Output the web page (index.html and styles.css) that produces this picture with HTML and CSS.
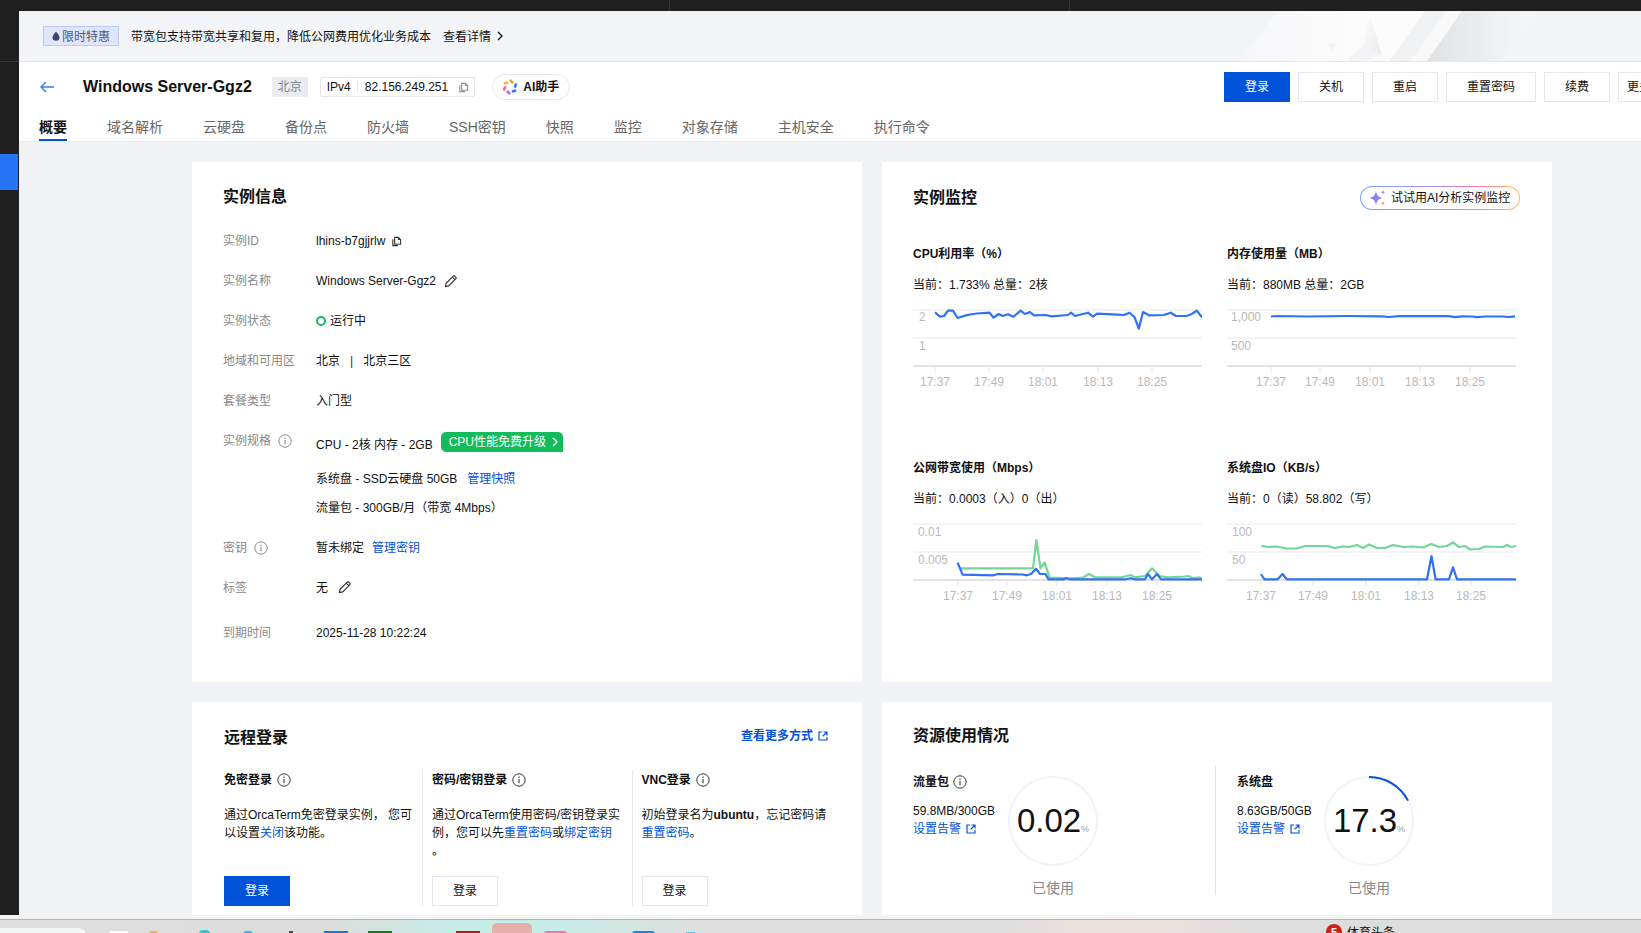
FILE: index.html
```html
<!DOCTYPE html>
<html lang="zh-CN">
<head>
<meta charset="utf-8">
<title>Windows Server-Ggz2</title>
<link rel="stylesheet" href="styles.css">
</head>
<body>
<svg class="defs" width="0" height="0" aria-hidden="true">
  <defs>
    <symbol id="i-info" viewBox="0 0 14 14"><circle cx="7" cy="7" r="6.2" fill="none" stroke="currentColor" stroke-width="1"/><path d="M7 6v4.2M7 3.600v1.300" fill="none" stroke="currentColor" stroke-width="1.100"/></symbol>
    <symbol id="i-copy" viewBox="0 0 12 12"><path d="M4 1.500h4l2.500 2.500v5H4z" fill="none" stroke="currentColor" stroke-width="1.200"/><path d="M2 3.500v7h5.500" fill="none" stroke="currentColor" stroke-width="1.200"/><path d="M7.600 1.500v2.800h2.800" fill="currentColor"/></symbol>
    <symbol id="i-edit" viewBox="0 0 14 14"><path d="M1.500 12.500l.6-3.200 7.200-7.200a1 1 0 0 1 1.400 0l1.200 1.200a1 1 0 0 1 0 1.400l-7.200 7.200zM8.300 3.200l2.500 2.500" fill="none" stroke="currentColor" stroke-width="1.200"/></symbol>
    <symbol id="i-ext" viewBox="0 0 10 10"><path d="M4 1H1v8h8V6" fill="none" stroke="currentColor" stroke-width="1.200"/><path d="M5.500 1H9v3.500M9 1L4.600 5.400" fill="none" stroke="currentColor" stroke-width="1.200"/></symbol>
    <symbol id="i-chev" viewBox="0 0 6 10"><path d="M1 1l4 4-4 4" fill="none" stroke="currentColor" stroke-width="1.300"/></symbol>
  </defs>
</svg>

<div class="screen">
  <div class="topbar"></div>
  <div class="shell">
    <aside class="rail"><div class="rail-line"></div><div class="rail-mark"></div></aside>
    <main class="main">
      <section class="banner">
        <svg class="banner-art" width="421" height="50" viewBox="0 0 421 50" aria-hidden="true">
          <defs>
            <linearGradient id="bandGrad" gradientUnits="userSpaceOnUse" x1="215" x2="300" y1="25" y2="25"><stop offset="0" stop-color="#e2e3e5"/><stop offset="1" stop-color="#f4f5f7"/></linearGradient>
            <linearGradient id="whiteGrad" gradientUnits="userSpaceOnUse" x1="20" x2="200" y1="25" y2="25"><stop offset="0" stop-color="#f5f6f8"/><stop offset=".5" stop-color="#fbfbfc"/><stop offset="1" stop-color="#fcfcfd"/></linearGradient>
            <linearGradient id="arrowGrad" x1="0" x2="1" y1="0" y2="1"><stop offset="0" stop-color="#fbfbfc"/><stop offset="1" stop-color="#ebecee"/></linearGradient>
          </defs>
          <polygon points="57,0 205,0 170,50 20,50" fill="url(#whiteGrad)"/>
          <polygon points="205,0 226,0 191,50 170,50" fill="#f1f2f3"/>
          <polygon points="226,0 242,0 207,50 191,50" fill="#f9f9fa"/>
          <polygon points="242,0 320,0 280,50 207,50" fill="url(#bandGrad)"/>
          <polygon points="150,5 162,44 143,35" fill="url(#arrowGrad)"/>
          <polygon points="143,35 162,44 145,50 127,50" fill="#f2f3f4"/>
          <polygon points="107,32 118,32 112,40" fill="#f3f4f5"/>
        </svg>
        <span class="promo-tag"><svg class="drop" width="8" height="10" viewBox="0 0 8 10"><path d="M4 .5C5.500 2.600 7.500 4.500 7.500 6.300a3.500 3.500 0 0 1-7 0C.5 4.500 2.500 2.600 4 .5z" fill="currentColor"/></svg>限时特惠</span>
        <span class="banner-text">带宽包支持带宽共享和复用，降低公网费用优化业务成本</span>
        <a class="banner-link">查看详情<svg class="chev" width="6" height="10"><use href="#i-chev"/></svg></a>
      </section>

      <header class="head">
        <div class="head-row">
          <div class="head-left">
            <svg class="back" width="14" height="12" viewBox="0 0 14 12"><path d="M6 1L1 6l5 5M1 6h13" fill="none" stroke="#3a7bea" stroke-width="1.400"/></svg>
            <h1 class="inst-title">Windows Server-Ggz2</h1>
            <span class="region-tag">北京</span>
            <span class="ip-box"><span class="ip-kind">IPv4</span><span class="ip-value">82.156.249.251</span><svg class="ip-copy" width="11" height="11"><use href="#i-copy"/></svg></span>
            <span class="ai-btn">
              <svg width="16" height="16" viewBox="0 0 16 16"><g fill="none" stroke-width="2.600"><path d="M8 .8L11 4.200" stroke="#f39a38"/><path d="M8 .8L11 4.200" stroke="#2f7df0" transform="rotate(60 8 8)"/><path d="M8 .8L11 4.200" stroke="#3f6ff0" transform="rotate(120 8 8)"/><path d="M8 .8L11 4.200" stroke="#a86cf0" transform="rotate(180 8 8)"/><path d="M8 .8L11 4.200" stroke="#f2609c" transform="rotate(240 8 8)"/><path d="M8 .8L11 4.200" stroke="#f4b93c" transform="rotate(300 8 8)"/></g></svg>
              AI助手
            </span>
          </div>
          <div class="actions">
            <button class="btn btn-primary">登录</button>
            <button class="btn">关机</button>
            <button class="btn">重启</button>
            <button class="btn btn-wide">重置密码</button>
            <button class="btn">续费</button>
            <button class="btn">更多操作</button>
          </div>
        </div>
        <nav class="tabs">
          <a class="tab tab-active">概要</a>
          <a class="tab">域名解析</a>
          <a class="tab">云硬盘</a>
          <a class="tab">备份点</a>
          <a class="tab">防火墙</a>
          <a class="tab">SSH密钥</a>
          <a class="tab">快照</a>
          <a class="tab">监控</a>
          <a class="tab">对象存储</a>
          <a class="tab">主机安全</a>
          <a class="tab">执行命令</a>
        </nav>
      </header>

      <div class="content">
        <section class="card card-info">
          <h2 class="card-title info-title">实例信息</h2>
          <div class="row"><span class="lbl">实例ID</span><span class="val">lhins-b7gjjrlw<svg class="ico-copy" width="11" height="11"><use href="#i-copy"/></svg></span></div>
          <div class="row"><span class="lbl">实例名称</span><span class="val">Windows Server-Ggz2<svg class="ico-edit" width="14" height="14"><use href="#i-edit"/></svg></span></div>
          <div class="row"><span class="lbl">实例状态</span><span class="val"><i class="status-dot"></i>运行中</span></div>
          <div class="row"><span class="lbl">地域和可用区</span><span class="val">北京<i class="pipe">|</i>北京三区</span></div>
          <div class="row"><span class="lbl">套餐类型</span><span class="val">入门型</span></div>
          <div class="spec">
            <span class="lbl">实例规格<svg class="ico-info-gray" width="14" height="14"><use href="#i-info"/></svg></span>
            <div class="spec-lines">
              <div class="spec-line">CPU - 2核 内存 - 2GB<span class="up-tag">CPU性能免费升级<svg class="chev-up" width="6" height="10"><use href="#i-chev"/></svg></span></div>
              <div class="spec-line spec-second">系统盘 - SSD云硬盘 50GB<a class="link link-gap">管理快照</a></div>
              <div class="spec-line spec-third">流量包 - 300GB/月（带宽 4Mbps）</div>
            </div>
          </div>
          <div class="row"><span class="lbl">密钥<svg class="ico-info-gray" width="14" height="14"><use href="#i-info"/></svg></span><span class="val">暂未绑定<a class="link link-gap-s">管理密钥</a></span></div>
          <div class="row"><span class="lbl">标签</span><span class="val">无<svg class="ico-edit ico-edit-tag" width="14" height="14"><use href="#i-edit"/></svg></span></div>
          <div class="row row-last"><span class="lbl">到期时间</span><span class="val">2025-11-28 10:22:24</span></div>
        </section>

        <section class="card card-monitor">
          <div class="mon-head">
            <h2 class="card-title">实例监控</h2>
            <span class="ai-pill">
              <svg width="18" height="18" viewBox="0 0 18 18"><defs><linearGradient id="spark" x1="0" x2="1" y1="0" y2="1"><stop offset="0" stop-color="#6f8cff"/><stop offset="1" stop-color="#b06cf0"/></linearGradient></defs><path d="M7 2c.8 4.300 2.200 6 6.500 7C9.200 10 7.800 11.700 7 16 6.200 11.700 4.800 10 .5 9 4.800 8 6.200 6.300 7 2z" fill="url(#spark)"/><path d="M14 .8c.3 1.500.9 2.100 2.400 2.500-1.500.4-2.100 1-2.400 2.500-.3-1.500-.9-2.100-2.400-2.500 1.500-.4 2.100-1 2.400-2.500z" fill="#a98cf5"/><path d="M14 11.800c.3 1.500.9 2.100 2.400 2.500-1.500.4-2.100 1-2.400 2.500-.3-1.500-.9-2.100-2.400-2.500 1.500-.4 2.100-1 2.400-2.500z" fill="#f59a7c"/></svg>
              试试用AI分析实例监控
            </span>
          </div>
          <div class="charts">
            <div class="chart">
              <div class="chart-title">CPU利用率（%）</div>
              <div class="chart-sub">当前：1.733% 总量：2核</div>
              <svg class="plot" width="289" height="95" viewBox="0 0 289 95">
                <path class="grid" d="M0 10H289M0 38H289"/><path class="axis" d="M0 66H289"/>
                <path class="tick" d="M22 67v5M76 67v5M130 67v5M185 67v5M239 67v5"/>
                <text class="ylab" x="6" y="21">2</text><text class="ylab" x="6" y="50">1</text>
                <text class="xlab" x="22" y="86">17:37</text><text class="xlab" x="76" y="86">17:49</text><text class="xlab" x="130" y="86">18:01</text><text class="xlab" x="185" y="86">18:13</text><text class="xlab" x="239" y="86">18:25</text>
                <polyline class="l-blue" points="22,12.300 27,16.700 31,16 35,10.700 40,10.700 44.600,18 51.600,15.700 60,14 64,13.500 76.500,12.700 80.600,17.700 85.600,14 89.800,16 95,14.300 100.500,16.700 107.600,10.700 111.700,14 117,12 121,15.300 132.500,15 138.700,16.300 155,15 158,12.700 162,16 175,12.700 180,16.700 184,13.700 205,14.700 211,15 216.600,12.700 221.600,17.300 225.800,28.700 230,12 236,15.300 250.600,15 257.700,12.700 263,16 273.400,16 278.800,14 283.800,10.700 289,17.300"/>
              </svg>
            </div>
            <div class="chart">
              <div class="chart-title">内存使用量（MB）</div>
              <div class="chart-sub">当前：880MB 总量：2GB</div>
              <svg class="plot" width="289" height="95" viewBox="0 0 289 95">
                <path class="grid" d="M0 10H289M0 38H289"/><path class="axis" d="M0 66H289"/>
                <path class="tick" d="M44 67v5M93 67v5M143 67v5M193 67v5M243 67v5"/>
                <text class="ylab" x="4" y="21">1,000</text><text class="ylab" x="4" y="50">500</text>
                <text class="xlab" x="44" y="86">17:37</text><text class="xlab" x="93" y="86">17:49</text><text class="xlab" x="143" y="86">18:01</text><text class="xlab" x="193" y="86">18:13</text><text class="xlab" x="243" y="86">18:25</text>
                <polyline class="l-blue" points="44,16.500 50,16 80,16.500 120,16 155,16.300 162,17 172,16.200 222,16.200 228,17.200 235,16.400 245,16.500 250,17.100 258,16.500 275,16.500 282,17 288,16.300"/>
              </svg>
            </div>
            <div class="chart">
              <div class="chart-title">公网带宽使用（Mbps）</div>
              <div class="chart-sub">当前：0.0003（入）0（出）</div>
              <svg class="plot" width="289" height="95" viewBox="0 0 289 95">
                <path class="grid" d="M0 10H289M0 38H289"/><path class="axis" d="M0 66H289"/>
                <path class="tick" d="M45 67v5M94 67v5M144 67v5M194 67v5M244 67v5"/>
                <text class="ylab" x="5" y="22">0.01</text><text class="ylab" x="5" y="50">0.005</text>
                <text class="xlab" x="45" y="86">17:37</text><text class="xlab" x="94" y="86">17:49</text><text class="xlab" x="144" y="86">18:01</text><text class="xlab" x="194" y="86">18:13</text><text class="xlab" x="244" y="86">18:25</text>
                <polyline class="l-green" points="47.500,54.300 120,54.300 123.400,26 127.500,54.300 131.600,48.700 136.600,63.700 151,64 155,64.700 170,63.500 176,60 182,63.300 209,63.300 217.500,61 221.600,63.300 232,62 239,54.300 246.500,62 254.800,63.300 271,62.500 275.500,62 279.700,64.300 286,63.300 289,64.300"/>
                <polyline class="l-blue" points="44.600,48.700 49.600,60.700 80.600,61.300 84.800,60 109.700,60.500 113.800,61.300 118,60 123,54.700 127,60 132.500,60 135.400,65.300 151,65.300 153,64 156,65.300 213,65.300 217.500,64.300 221.600,65.300 232,65.300 235,60 239,65.300 244,60 248,65.300 289,65.300"/>
              </svg>
            </div>
            <div class="chart">
              <div class="chart-title">系统盘IO（KB/s）</div>
              <div class="chart-sub">当前：0（读）58.802（写）</div>
              <svg class="plot" width="289" height="95" viewBox="0 0 289 95">
                <path class="grid" d="M0 10H289M0 38H289"/><path class="axis" d="M0 66H289"/>
                <path class="tick" d="M34 67v5M86 67v5M139 67v5M192 67v5M244 67v5"/>
                <text class="ylab" x="5" y="22">100</text><text class="ylab" x="5" y="50">50</text>
                <text class="xlab" x="34" y="86">17:37</text><text class="xlab" x="86" y="86">17:49</text><text class="xlab" x="139" y="86">18:01</text><text class="xlab" x="192" y="86">18:13</text><text class="xlab" x="244" y="86">18:25</text>
                <polyline class="l-green" points="34,32 42,33 50,32.500 60,34.500 70,34.500 78,32 92,32 100,32 108,34 116,32.500 122,33 130,31 136,34 142,30.500 150,34 158,34 166,31 176,33 186,32.500 196,33.500 204.500,30 212,33 220,32 226,28.500 232,33 238,32 243,35.500 252,35 258,32.500 276,33 280,31 284,33 289,32"/>
                <polyline class="l-blue" points="34,60 37.400,65.300 50.600,65.300 55.600,60 59.800,65.300 200,65.300 204.500,42 208.600,65.300 221.900,65.300 226,53.300 230,65.300 289,65.300"/>
              </svg>
            </div>
          </div>
        </section>

        <section class="card card-login">
          <div class="login-head">
            <h2 class="card-title">远程登录</h2>
            <a class="link link-more">查看更多方式<svg class="ico-ext" width="10" height="10"><use href="#i-ext"/></svg></a>
          </div>
          <div class="login-cols">
            <div class="login-col">
              <div class="col-title">免密登录<svg class="ico-info-dark" width="14" height="14"><use href="#i-info"/></svg></div>
              <p class="col-text">通过OrcaTerm免密登录实例， 您可<br>以设置<a class="link">关闭</a>该功能。</p>
              <button class="btn btn-primary">登录</button>
            </div>
            <div class="login-col login-col-b">
              <div class="col-title">密码/密钥登录<svg class="ico-info-dark" width="14" height="14"><use href="#i-info"/></svg></div>
              <p class="col-text">通过OrcaTerm使用密码/密钥登录实<br>例，您可以先<a class="link">重置密码</a>或<a class="link">绑定密钥</a><br>。</p>
              <button class="btn">登录</button>
            </div>
            <div class="login-col login-col-b">
              <div class="col-title">VNC登录<svg class="ico-info-dark" width="14" height="14"><use href="#i-info"/></svg></div>
              <p class="col-text">初始登录名为<b class="name">ubuntu</b>，忘记密码请<br><a class="link">重置密码</a>。</p>
              <button class="btn">登录</button>
            </div>
          </div>
        </section>

        <section class="card card-res">
          <h2 class="card-title res-title">资源使用情况</h2>
          <div class="res-row">
            <div class="res-part res-part-a">
              <div class="res-info res-info-a">
                <div class="res-name">流量包<svg class="ico-info-dark" width="14" height="14"><use href="#i-info"/></svg></div>
                <div class="res-used">59.8MB/300GB</div>
                <a class="link res-link">设置告警<svg class="ico-ext" width="10" height="10"><use href="#i-ext"/></svg></a>
              </div>
              <div class="gauge-col">
                <div class="gauge">
                  <svg class="gauge-ring" width="90" height="90" viewBox="0 0 90 90"><circle cx="45" cy="45" r="44" fill="none" stroke="#f1f3f8" stroke-width="2"/></svg>
                  <span class="gauge-num">0.02</span><span class="gauge-pct">%</span>
                </div>
                <div class="gauge-cap">已使用</div>
              </div>
            </div>
            <div class="res-part">
              <div class="res-info res-info-b">
                <div class="res-name">系统盘</div>
                <div class="res-used">8.63GB/50GB</div>
                <a class="link res-link">设置告警<svg class="ico-ext" width="10" height="10"><use href="#i-ext"/></svg></a>
              </div>
              <div class="gauge-col">
                <div class="gauge">
                  <svg class="gauge-ring" width="90" height="90" viewBox="0 0 90 90"><circle cx="45" cy="45" r="44" fill="none" stroke="#f1f3f8" stroke-width="2"/><path d="M45 1A44 44 0 0 1 84 24.600" fill="none" stroke="#0052d9" stroke-width="2"/></svg>
                  <span class="gauge-num">17.3</span><span class="gauge-pct">%</span>
                </div>
                <div class="gauge-cap">已使用</div>
              </div>
            </div>
          </div>
        </section>
      </div>
    </main>
  </div>
  <div class="strip"></div>
  <div class="taskbar">
    <i class="tb tb-chip"></i><i class="tb tb-white"></i><i class="tb tb-orange"></i><i class="tb tb-teal"></i><i class="tb tb-cyan"></i><i class="tb tb-dark"></i><i class="tb tb-blue"></i><i class="tb tb-green"></i><i class="tb tb-red"></i><i class="tb tb-active"></i><i class="tb tb-pink"></i><i class="tb tb-blue2"></i><i class="tb tb-cyan2"></i>
    <span class="tb-badge">5</span><span class="tb-news">体育头条</span>
  </div>
</div>
</body>
</html>
```

FILE: styles.css
```css
* { box-sizing: border-box; }
html, body { margin: 0; padding: 0; }
body {
  width: 1641px;
  height: 933px;
  overflow: hidden;
  font-family: "Liberation Sans", "Noto Sans CJK SC", sans-serif;
  font-size: 12px;
  color: #111;
  background: #f1f2f6;
}
a { color: inherit; text-decoration: none; }
h1, h2, p { margin: 0; }
.defs { position: absolute; }

.screen { display: flex; flex-direction: column; width: 1641px; height: 933px; overflow: hidden; }
.topbar {
  height: 11px;
  flex: none;
  background: linear-gradient(90deg, #1f1f1f 669px, #333 669px, #333 670px, #1f1f1f 670px, #1f1f1f 1069px, #333 1069px, #333 1070px, #1f1f1f 1070px);
}
.shell { display: flex; height: 904px; flex: none; overflow: hidden; }
.rail { width: 19px; flex: none; background: #1f1f1f; padding-top: 50px; }
.rail-line { height: 1px; background: #383838; }
.rail-mark { width: 18px; height: 36px; margin-top: 92px; background: #2673f6; }
.main { width: 1622px; flex: none; display: flex; flex-direction: column; overflow: hidden; }

/* banner */
.banner {
  position: relative;
  display: flex;
  align-items: center;
  height: 51px;
  flex: none;
  padding: 0 0 1px 24px;
  background: #f3f4f7;
  border-bottom: 1px solid #e6e8ee;
}
.banner-art { position: absolute; right: 0; top: 0; }
.promo-tag {
  display: flex;
  align-items: center;
  justify-content: center;
  gap: 2px;
  width: 76px;
  height: 20px;
  background: #dfe5fb;
  border: 1px solid #bccafa;
  color: #4d5a74;
}
.drop { color: #3c4a68; }
.banner-text { margin-left: 12px; position: relative; }
.banner-link { display: flex; align-items: center; margin-left: 12px; position: relative; }
.chev { margin-left: 6px; }

/* header */
.head { flex: none; height: 80px; background: #fff; border-bottom: 1px solid #e6e8ee; display: flex; flex-direction: column; }
.head-row { display: flex; height: 50px; padding-top: 10px; }
.head-left { display: flex; align-items: center; width: 1205px; height: 30px; padding-left: 21px; flex: none; }
.inst-title { margin-left: 29px; font-size: 16px; line-height: 22px; font-weight: 700; white-space: nowrap; color: #111; }
.region-tag { margin-left: 20px; width: 36px; height: 20px; line-height: 20px; text-align: center; background: #e9edf2; color: #80868f; }
.ip-box { display: flex; align-items: center; width: 155px; height: 20px; margin-left: 12px; padding-left: 6px; border: 1px solid #e3e6eb; border-radius: 2px; }
.ip-kind { padding-right: 6px; border-right: 1px solid #e3e6eb; line-height: 11px; }
.ip-value { margin-left: 7px; }
.ip-copy { margin-left: 10px; color: #8a8f99; }
.ai-btn { display: flex; align-items: center; justify-content: center; gap: 5px; width: 78px; height: 26px; margin-left: 17px; border: 1px solid #e6e8ee; border-radius: 13px; font-weight: 700; line-height: 20px; }
.actions { display: flex; gap: 8px; flex: none; }
.btn {
  flex: none;
  width: 66px;
  height: 30px;
  padding: 0;
  background: #fff;
  border: 1px solid #e3e6ee;
  font: inherit;
  line-height: 20px;
  color: #111;
}
.btn-wide { width: 90px; }
.btn-primary { background: #0052d9; border-color: #0052d9; color: #fff; }

.tabs { display: flex; gap: 40px; padding-left: 20px; height: 30px; }
.tab { height: 30px; line-height: 32px; font-size: 14px; color: #666; white-space: nowrap; }
.tab-active { color: #111; font-weight: 700; border-bottom: 2px solid #0052d9; }

/* content */
.content {
  display: grid;
  grid-template-columns: 670px 670px;
  grid-template-rows: 520px 240px;
  gap: 20px;
  padding: 20px 0 0 173px;
  flex: 1;
  min-height: 0;
  background: #f1f2f6;
}
.card { background: #fff; }
.card-title { height: 24px; font-size: 16px; font-weight: 700; line-height: 24px; color: #111; }

/* info */
.card-info { padding: 23px 0 0 31px; }
.info-title { margin-bottom: 12px; }
.row { display: flex; align-items: center; height: 40px; }
.row-last { margin-top: 5px; }
.lbl { display: flex; align-items: center; width: 93px; flex: none; color: #888; line-height: 20px; height: 20px; }
.val { display: flex; align-items: center; color: #111; line-height: 20px; }
.ico-copy { margin-left: 6px; color: #333; }
.ico-edit { margin-left: 8px; color: #333; }
.ico-edit-tag { margin-left: 10px; margin-top: -3px; }
.ico-info-gray { margin-left: 7px; color: #888; }
.ico-info-dark { margin-left: 4px; color: #333; vertical-align: -3px; }
.status-dot { width: 10px; height: 10px; margin-right: 4px; border: 2px solid #12b85c; border-radius: 50%; }
.pipe { margin: 0 10px; font-style: normal; color: #333; }
.spec { display: flex; align-items: flex-start; padding-top: 10px; height: 107px; }
.spec-line { display: flex; line-height: 28px; height: 28px; white-space: pre; }
.spec-second { margin-top: 6px; }
.spec-third { margin-top: 1px; }
.up-tag {
  display: flex;
  align-items: center;
  gap: 6px;
  height: 20px;
  margin: 1px 0 0 8px;
  padding-left: 8px;
  width: 122px;
  background: #12bc5c;
  color: #fff;
  line-height: 20px;
  border-radius: 5px 5px 0 5px;
}
.chev-up { color: #fff; }
.link { color: #0052d9; }
.link-gap { margin-left: 10px; }
.link-gap-s { margin-left: 8px; }

/* monitor */
.card-monitor { padding: 24px 32px 0 31px; }
.mon-head { display: flex; justify-content: space-between; align-items: center; height: 24px; }
.ai-pill {
  display: flex;
  align-items: center;
  gap: 4px;
  width: 160px;
  height: 24px;
  padding-left: 8px;
  line-height: 20px;
  border: 1px solid transparent;
  border-radius: 12px;
  background: linear-gradient(#fff, #fff) padding-box, linear-gradient(90deg, #6ea6ff, #a48bff 45%, #ff7b9c 75%, #ffc060) border-box;
}
.charts { display: grid; grid-template-columns: 289px 289px; grid-auto-rows: 214px; column-gap: 25px; margin-top: 34px; }
.chart-title { height: 20px; line-height: 20px; font-weight: 700; color: #111; }
.chart-sub { margin-top: 11px; height: 20px; line-height: 20px; }
.plot { display: block; margin-top: 5px; }
.grid { stroke: #f4f4f5; stroke-width: 2; fill: none; }
.axis { stroke: #e3e3e5; stroke-width: 2; fill: none; }
.tick { stroke: #e3e3e5; stroke-width: 1; fill: none; }
.ylab, .xlab { font-size: 12px; fill: #b9b9b9; }
.xlab { text-anchor: middle; }
.l-blue { fill: none; stroke: #2f72f5; stroke-width: 2.200; stroke-linejoin: round; }
.l-green { fill: none; stroke: #73d596; stroke-width: 2.200; stroke-linejoin: round; }

/* login */
.card-login { padding: 24px 0 0 32px; }
.login-head { display: flex; justify-content: space-between; align-items: center; height: 24px; width: 604px; }
.link-more { font-weight: 700; display: flex; align-items: center; margin-top: -4px; line-height: 20px; }
.ico-ext { margin-left: 5px; vertical-align: -1px; }
.login-cols { display: flex; margin-top: 20px; height: 136px; }
.login-col { display: flex; flex-direction: column; align-items: flex-start; width: 198px; flex: none; }
.login-col-b { width: 209.500px; padding-left: 9px; border-left: 1px solid #e6e8ee; }
.col-title { height: 20px; line-height: 20px; font-weight: 700; white-space: nowrap; display: flex; align-items: center; }
.col-title .ico-info-dark { margin-left: 5px; }
.col-text { margin-top: 16px; line-height: 18px; white-space: nowrap; }
.name { font-weight: 700; }
.login-col .btn { margin-top: auto; }

/* resources */
.card-res { padding: 22px 0 0 31px; }
.res-row { display: flex; margin-top: 18px; height: 129px; }
.res-part { display: flex; flex: none; }
.res-part-a { width: 303px; border-right: 1px solid #e1e3e8; margin-right: 21px; }
.res-info { flex: none; padding-top: 6px; }
.res-info-a { width: 95px; }
.res-info-b { width: 87px; }
.res-name { display: flex; align-items: center; height: 20px; line-height: 20px; font-weight: 700; }
.res-used { margin-top: 10px; line-height: 18px; white-space: nowrap; }
.res-link { display: block; line-height: 18px; }
.gauge-col { width: 90px; flex: none; padding-top: 10px; }
.gauge { position: relative; display: flex; align-items: center; justify-content: center; width: 90px; height: 90px; }
.gauge-ring { position: absolute; left: 0; top: 0; }
.gauge-num { position: relative; font-size: 33px; line-height: 40px; color: #111; }
.gauge-pct { position: relative; font-size: 9px; color: #999; margin-top: 15px; }
.gauge-cap { margin-top: 12px; height: 20px; line-height: 20px; font-size: 14px; text-align: center; color: #888; }

/* desktop strip */
.strip { height: 5px; flex: none; background: #f3f3f3; border-bottom: 1px solid #b4b4b4; }
.taskbar {
  flex: 1;
  display: flex;
  align-items: flex-start;
  overflow: hidden;
  background: linear-gradient(90deg, #dedede 0, #dcdcdc 20%, #c6eee6 28%, #c6eee6 33%, #dfdfdf 43%, #dedede 60%, #ece2df 68%, #dedede 78%, #dcdcdc 100%);
}
.tb { display: block; flex: none; height: 3px; margin-top: 11px; }
.tb-chip { width: 86px; height: 8px; margin-top: 8px; background: #f4f6f5; border-radius: 0 10px 0 0; }
.tb-white { width: 18px; margin-left: 24px; background: #fff; }
.tb-orange { width: 7px; margin-left: 22px; background: #e8b64c; }
.tb-teal { width: 11px; margin-left: 42px; margin-top: 10px; height: 4px; background: #35c3c8; border-radius: 5px 5px 0 0; }
.tb-cyan { width: 10px; margin-left: 33px; background: #36b6f0; border-radius: 4px 4px 0 0; }
.tb-dark { width: 4px; margin-left: 36px; background: #444; }
.tb-blue { width: 24px; margin-left: 31px; background: #1a73f0; }
.tb-green { width: 24px; margin-left: 20px; background: #0f7d1a; }
.tb-red { width: 24px; margin-left: 64px; background: #d80a22; }
.tb-active { width: 40px; height: 10px; margin-left: 12px; margin-top: 3px; background: #e8aeaa; border-radius: 5px 5px 0 0; }
.tb-pink { width: 23px; margin-left: 12px; background: #f772a8; border-radius: 5px 5px 0 0; }
.tb-blue2 { width: 23px; margin-left: 65px; background: #1488dc; border-radius: 5px 5px 0 0; }
.tb-cyan2 { width: 9px; margin-left: 31px; margin-top: 12px; height: 2px; background: #5cc8f0; }
.tb-badge { flex: none; width: 16px; height: 16px; margin: 4px 0 0 631px; border-radius: 50%; background: #c8241c; color: #fff; font-size: 11px; font-weight: 700; line-height: 16px; text-align: center; }
.tb-news { flex: none; margin: 5px 0 0 5px; line-height: 16px; }
```
